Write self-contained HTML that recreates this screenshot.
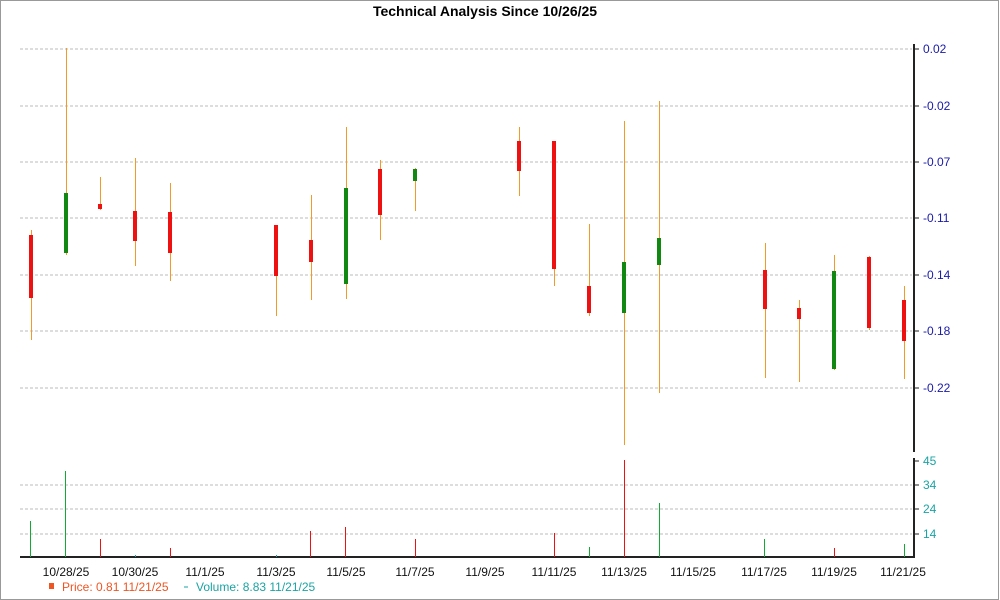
<!DOCTYPE html><html><head><style>body{margin:0;background:#fff}svg{display:block;font-family:"Liberation Sans",sans-serif}</style></head><body>
<svg width="1000" height="600" xmlns="http://www.w3.org/2000/svg">
<rect x="0.5" y="0.5" width="998" height="599" fill="#fff" stroke="#999"/>
<text x="485" y="16" font-size="14" font-weight="bold" text-anchor="middle">Technical Analysis Since 10/26/25</text>
<g shape-rendering="crispEdges">
<g stroke="#bbb" stroke-dasharray="3,2">
<line x1="20" x2="912" y1="49" y2="49"/><line x1="20" x2="912" y1="106" y2="106"/><line x1="20" x2="912" y1="162" y2="162"/><line x1="20" x2="912" y1="218" y2="218"/><line x1="20" x2="912" y1="275" y2="275"/><line x1="20" x2="912" y1="331" y2="331"/><line x1="20" x2="912" y1="388" y2="388"/>
<line x1="20" x2="912" y1="485" y2="485"/><line x1="20" x2="912" y1="509" y2="509"/><line x1="20" x2="912" y1="534" y2="534"/>
</g>
<line x1="914" x2="914" y1="44" y2="452" stroke="#222" stroke-width="2"/>
<line x1="914" x2="914" y1="458" y2="558" stroke="#222" stroke-width="2"/>
<line x1="20" x2="915" y1="557" y2="557" stroke="#222" stroke-width="2"/>
<g stroke="#222"><line x1="914" x2="919" y1="49" y2="49"/><line x1="914" x2="919" y1="106" y2="106"/><line x1="914" x2="919" y1="162" y2="162"/><line x1="914" x2="919" y1="218" y2="218"/><line x1="914" x2="919" y1="275" y2="275"/><line x1="914" x2="919" y1="331" y2="331"/><line x1="914" x2="919" y1="388" y2="388"/><line x1="914" x2="919" y1="461" y2="461"/><line x1="914" x2="919" y1="485" y2="485"/><line x1="914" x2="919" y1="509" y2="509"/><line x1="914" x2="919" y1="534" y2="534"/></g>
<g stroke="#f09a2a" stroke-width="1">
<line x1="31.5" x2="31.5" y1="230" y2="340"/><line x1="66.5" x2="66.5" y1="48" y2="255"/><line x1="100.5" x2="100.5" y1="177" y2="210"/><line x1="135.5" x2="135.5" y1="158" y2="266"/><line x1="170.5" x2="170.5" y1="183" y2="281"/><line x1="276.5" x2="276.5" y1="225" y2="316"/><line x1="311.5" x2="311.5" y1="195" y2="300"/><line x1="346.5" x2="346.5" y1="127" y2="299"/><line x1="380.5" x2="380.5" y1="160" y2="240"/><line x1="415.5" x2="415.5" y1="168" y2="211"/><line x1="519.5" x2="519.5" y1="127" y2="196"/><line x1="554.5" x2="554.5" y1="141" y2="286"/><line x1="589.5" x2="589.5" y1="224" y2="316"/><line x1="624.5" x2="624.5" y1="121" y2="445"/><line x1="659.5" x2="659.5" y1="101" y2="393"/><line x1="765.5" x2="765.5" y1="243" y2="378"/><line x1="799.5" x2="799.5" y1="300" y2="382"/><line x1="834.5" x2="834.5" y1="255" y2="370"/><line x1="869.5" x2="869.5" y1="256" y2="330"/><line x1="904.5" x2="904.5" y1="286" y2="379"/>
</g>
<g>
<rect x="29" y="235" width="4" height="63" fill="#ee1111"/><rect x="64" y="193" width="4" height="60" fill="#118811"/><rect x="98" y="204" width="4" height="5" fill="#ee1111"/><rect x="133" y="211" width="4" height="30" fill="#ee1111"/><rect x="168" y="212" width="4" height="41" fill="#ee1111"/><rect x="274" y="225" width="4" height="51" fill="#ee1111"/><rect x="309" y="240" width="4" height="22" fill="#ee1111"/><rect x="344" y="188" width="4" height="96" fill="#118811"/><rect x="378" y="169" width="4" height="46" fill="#ee1111"/><rect x="413" y="169" width="4" height="12" fill="#118811"/><rect x="517" y="141" width="4" height="30" fill="#ee1111"/><rect x="552" y="141" width="4" height="128" fill="#ee1111"/><rect x="587" y="286" width="4" height="27" fill="#ee1111"/><rect x="622" y="262" width="4" height="51" fill="#118811"/><rect x="657" y="238" width="4" height="27" fill="#118811"/><rect x="763" y="270" width="4" height="39" fill="#ee1111"/><rect x="797" y="308" width="4" height="11" fill="#ee1111"/><rect x="832" y="271" width="4" height="98" fill="#118811"/><rect x="867" y="257" width="4" height="71" fill="#ee1111"/><rect x="902" y="300" width="4" height="41" fill="#ee1111"/>
</g>
<g stroke-width="1">
<line x1="30.5" x2="30.5" y1="521" y2="557" stroke="#11aa33"/><line x1="65.5" x2="65.5" y1="471" y2="557" stroke="#11aa33"/><line x1="100.5" x2="100.5" y1="539" y2="557" stroke="#ee1111"/><line x1="135.5" x2="135.5" y1="555" y2="557" stroke="#1aa3a3"/><line x1="170.5" x2="170.5" y1="548" y2="557" stroke="#ee1111"/><line x1="276.5" x2="276.5" y1="555" y2="557" stroke="#1aa3a3"/><line x1="310.5" x2="310.5" y1="531" y2="557" stroke="#ee1111"/><line x1="345.5" x2="345.5" y1="527" y2="557" stroke="#ee1111"/><line x1="415.5" x2="415.5" y1="539" y2="557" stroke="#ee1111"/><line x1="554.5" x2="554.5" y1="533" y2="557" stroke="#ee1111"/><line x1="589.5" x2="589.5" y1="547" y2="557" stroke="#11aa33"/><line x1="624.5" x2="624.5" y1="460" y2="557" stroke="#ee1111"/><line x1="659.5" x2="659.5" y1="503" y2="557" stroke="#11aa33"/><line x1="764.5" x2="764.5" y1="539" y2="557" stroke="#11aa33"/><line x1="834.5" x2="834.5" y1="548" y2="557" stroke="#ee1111"/><line x1="904.5" x2="904.5" y1="544" y2="557" stroke="#11aa33"/>
</g>
</g>
<g font-size="12" fill="#1a1aaa"><text x="923" y="53">0.02</text><text x="923" y="110">-0.02</text><text x="923" y="166">-0.07</text><text x="923" y="222">-0.11</text><text x="923" y="279">-0.14</text><text x="923" y="335">-0.18</text><text x="923" y="392">-0.22</text></g>
<g font-size="12" fill="#1aa3a3"><text x="923" y="465">45</text><text x="923" y="489">34</text><text x="923" y="513">24</text><text x="923" y="538">14</text></g>
<g font-size="12" text-anchor="middle" fill="#111"><text x="66" y="576">10/28/25</text><text x="135" y="576">10/30/25</text><text x="205" y="576">11/1/25</text><text x="276" y="576">11/3/25</text><text x="346" y="576">11/5/25</text><text x="415" y="576">11/7/25</text><text x="485" y="576">11/9/25</text><text x="554" y="576">11/11/25</text><text x="624" y="576">11/13/25</text><text x="693" y="576">11/15/25</text><text x="764" y="576">11/17/25</text><text x="834" y="576">11/19/25</text><text x="903" y="576">11/21/25</text></g>
<rect x="49" y="583" width="5" height="6" fill="#ee5522"/>
<text x="62" y="591" font-size="12" fill="#ee5522">Price: 0.81  11/21/25</text>
<line x1="184" x2="188" y1="587" y2="587" stroke="#1aa3a3"/>
<text x="196" y="591" font-size="12" fill="#1aa3a3">Volume: 8.83  11/21/25</text>
</svg></body></html>
